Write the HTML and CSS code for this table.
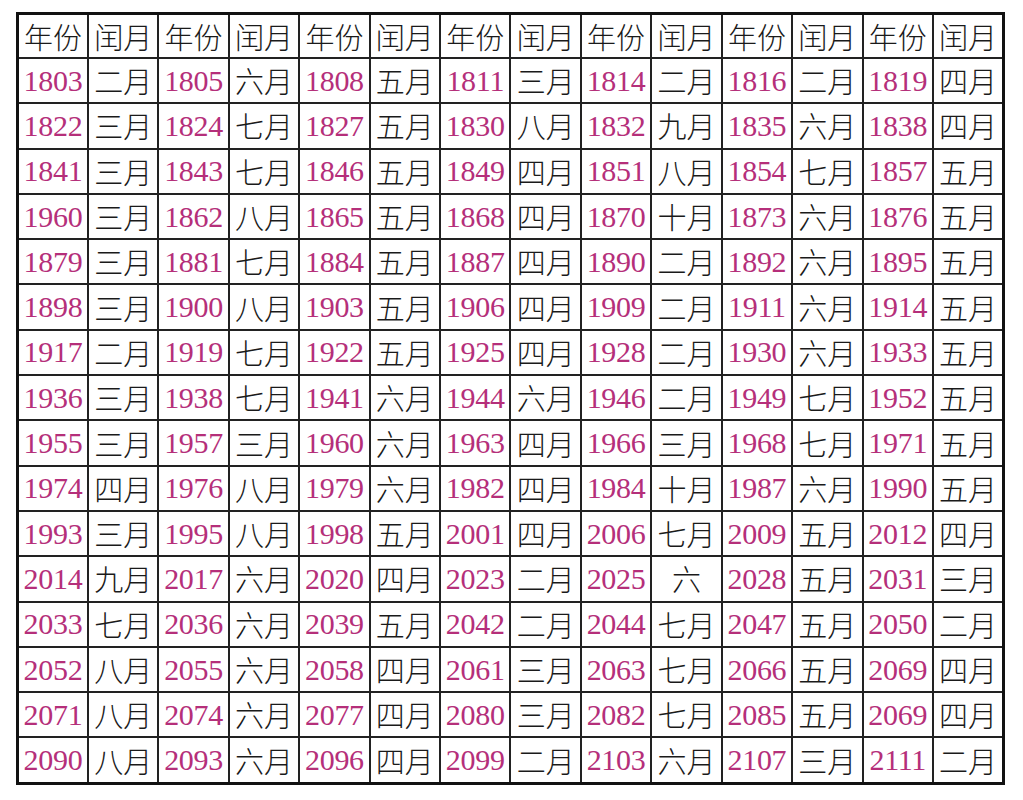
FILE: index.html
```html
<!DOCTYPE html>
<html lang="zh">
<head>
<meta charset="utf-8">
<title>闰月表</title>
<link rel="stylesheet" href="styles.css">
</head>
<body>
<div class="page">
<table class="leap">
<colgroup>
<col><col><col><col><col><col><col><col><col><col><col><col><col><col>
</colgroup>
<thead>
<tr><th>年份</th><th>闰月</th><th>年份</th><th>闰月</th><th>年份</th><th>闰月</th><th>年份</th><th>闰月</th><th>年份</th><th>闰月</th><th>年份</th><th>闰月</th><th>年份</th><th>闰月</th></tr>
</thead>
<tbody>
<tr><td class="y">1803</td><td>二月</td><td class="y">1805</td><td>六月</td><td class="y">1808</td><td>五月</td><td class="y">1811</td><td>三月</td><td class="y">1814</td><td>二月</td><td class="y">1816</td><td>二月</td><td class="y">1819</td><td>四月</td></tr>
<tr><td class="y">1822</td><td>三月</td><td class="y">1824</td><td>七月</td><td class="y">1827</td><td>五月</td><td class="y">1830</td><td>八月</td><td class="y">1832</td><td>九月</td><td class="y">1835</td><td>六月</td><td class="y">1838</td><td>四月</td></tr>
<tr><td class="y">1841</td><td>三月</td><td class="y">1843</td><td>七月</td><td class="y">1846</td><td>五月</td><td class="y">1849</td><td>四月</td><td class="y">1851</td><td>八月</td><td class="y">1854</td><td>七月</td><td class="y">1857</td><td>五月</td></tr>
<tr><td class="y">1960</td><td>三月</td><td class="y">1862</td><td>八月</td><td class="y">1865</td><td>五月</td><td class="y">1868</td><td>四月</td><td class="y">1870</td><td>十月</td><td class="y">1873</td><td>六月</td><td class="y">1876</td><td>五月</td></tr>
<tr><td class="y">1879</td><td>三月</td><td class="y">1881</td><td>七月</td><td class="y">1884</td><td>五月</td><td class="y">1887</td><td>四月</td><td class="y">1890</td><td>二月</td><td class="y">1892</td><td>六月</td><td class="y">1895</td><td>五月</td></tr>
<tr><td class="y">1898</td><td>三月</td><td class="y">1900</td><td>八月</td><td class="y">1903</td><td>五月</td><td class="y">1906</td><td>四月</td><td class="y">1909</td><td>二月</td><td class="y">1911</td><td>六月</td><td class="y">1914</td><td>五月</td></tr>
<tr><td class="y">1917</td><td>二月</td><td class="y">1919</td><td>七月</td><td class="y">1922</td><td>五月</td><td class="y">1925</td><td>四月</td><td class="y">1928</td><td>二月</td><td class="y">1930</td><td>六月</td><td class="y">1933</td><td>五月</td></tr>
<tr><td class="y">1936</td><td>三月</td><td class="y">1938</td><td>七月</td><td class="y">1941</td><td>六月</td><td class="y">1944</td><td>六月</td><td class="y">1946</td><td>二月</td><td class="y">1949</td><td>七月</td><td class="y">1952</td><td>五月</td></tr>
<tr><td class="y">1955</td><td>三月</td><td class="y">1957</td><td>三月</td><td class="y">1960</td><td>六月</td><td class="y">1963</td><td>四月</td><td class="y">1966</td><td>三月</td><td class="y">1968</td><td>七月</td><td class="y">1971</td><td>五月</td></tr>
<tr><td class="y">1974</td><td>四月</td><td class="y">1976</td><td>八月</td><td class="y">1979</td><td>六月</td><td class="y">1982</td><td>四月</td><td class="y">1984</td><td>十月</td><td class="y">1987</td><td>六月</td><td class="y">1990</td><td>五月</td></tr>
<tr><td class="y">1993</td><td>三月</td><td class="y">1995</td><td>八月</td><td class="y">1998</td><td>五月</td><td class="y">2001</td><td>四月</td><td class="y">2006</td><td>七月</td><td class="y">2009</td><td>五月</td><td class="y">2012</td><td>四月</td></tr>
<tr><td class="y">2014</td><td>九月</td><td class="y">2017</td><td>六月</td><td class="y">2020</td><td>四月</td><td class="y">2023</td><td>二月</td><td class="y">2025</td><td>六</td><td class="y">2028</td><td>五月</td><td class="y">2031</td><td>三月</td></tr>
<tr><td class="y">2033</td><td>七月</td><td class="y">2036</td><td>六月</td><td class="y">2039</td><td>五月</td><td class="y">2042</td><td>二月</td><td class="y">2044</td><td>七月</td><td class="y">2047</td><td>五月</td><td class="y">2050</td><td>二月</td></tr>
<tr><td class="y">2052</td><td>八月</td><td class="y">2055</td><td>六月</td><td class="y">2058</td><td>四月</td><td class="y">2061</td><td>三月</td><td class="y">2063</td><td>七月</td><td class="y">2066</td><td>五月</td><td class="y">2069</td><td>四月</td></tr>
<tr><td class="y">2071</td><td>八月</td><td class="y">2074</td><td>六月</td><td class="y">2077</td><td>四月</td><td class="y">2080</td><td>三月</td><td class="y">2082</td><td>七月</td><td class="y">2085</td><td>五月</td><td class="y">2069</td><td>四月</td></tr>
<tr><td class="y">2090</td><td>八月</td><td class="y">2093</td><td>六月</td><td class="y">2096</td><td>四月</td><td class="y">2099</td><td>二月</td><td class="y">2103</td><td>六月</td><td class="y">2107</td><td>三月</td><td class="y">2111</td><td>二月</td></tr>
</tbody>
</table>
</div>
</body>
</html>
```

FILE: styles.css
```css
html, body {
  margin: 0;
  padding: 0;
  background: #ffffff;
}

.page {
  padding: 12px 0 0 16px;
}

.leap {
  width: 989px;
  table-layout: fixed;
  border-collapse: collapse;
  border: 3px solid #111111;
  background: #ffffff;
}

.leap th,
.leap td {
  border: 2px solid #222222;
  padding: 0;
  text-align: center;
  vertical-align: middle;
  font-family: "Noto Sans CJK SC", "Liberation Serif", sans-serif;
  font-weight: 300;
  font-size: 29px;
  line-height: 1;
  color: #1a1a1a;
  white-space: nowrap;
  overflow: hidden;
}

.leap thead th {
  height: 42px;
}

.leap tbody td {
  height: 43.3px;
}

.leap td.y {
  font-family: "Liberation Serif", "Times New Roman", serif;
  font-weight: normal;
  font-size: 30px;
  color: #b52f7a;
  letter-spacing: -0.3px;
}
```
